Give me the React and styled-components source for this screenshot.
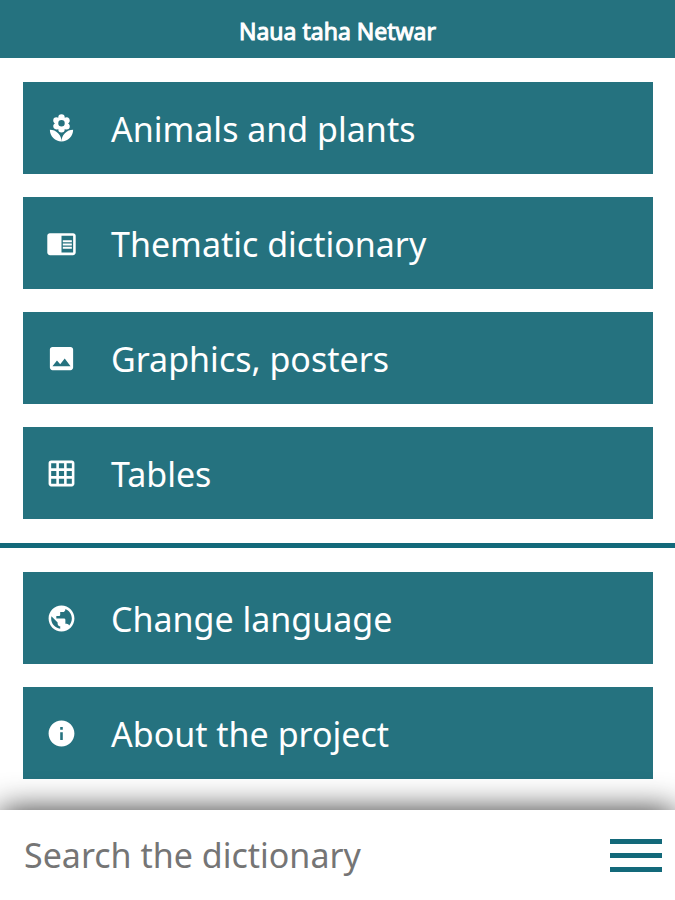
import React, { useState } from "react";
import styled, { createGlobalStyle } from "styled-components";
import {
  MdLocalFlorist,
  MdChromeReaderMode,
  MdImage,
  MdGridOn,
  MdPublic,
  MdInfo,
} from "react-icons/md";

const sections = [
  { label: "Animals and plants", Icon: MdLocalFlorist },
  { label: "Thematic dictionary", Icon: MdChromeReaderMode },
  { label: "Graphics, posters", Icon: MdImage },
  { label: "Tables", Icon: MdGridOn },
];

const settings = [
  { label: "Change language", Icon: MdPublic },
  { label: "About the project", Icon: MdInfo },
];

const App = () => {
  const [query, setQuery] = useState("");

  return (
    <Page>
      <GlobalStyle />
      <Header>
        <h1>Naua taha Netwar</h1>
      </Header>
      <main>
        <MenuList items={sections} />
        <Divider />
        <MenuList items={settings} />
      </main>
      <SearchBar>
        <SearchInput
          type="text"
          aria-label="Search the dictionary"
          placeholder="Search the dictionary"
          value={query}
          onChange={(e) => setQuery(e.target.value)}
        />
        <MenuToggle type="button" aria-label="Menu">
          <span></span>
          <span></span>
          <span></span>
        </MenuToggle>
      </SearchBar>
    </Page>
  );
};

const MenuList = ({ items }) => (
  <Menu>
    {items.map(({ label, Icon }) => (
      <MenuButton key={label} type="button">
        <Icon />
        <span>{label}</span>
      </MenuButton>
    ))}
  </Menu>
);

const GlobalStyle = createGlobalStyle`
  :root {
    --c-teal: #25727f;
    --c-teal-dark: #13697a;
  }
  * {
    box-sizing: border-box;
  }
  body {
    margin: 0;
    background: #fff;
    font-family: "Noto Sans", "Open Sans", sans-serif;
  }
  button,
  input {
    font-family: inherit;
  }
`;

const Page = styled.div`
  display: flex;
  flex-direction: column;
  min-height: 100vh;

  main {
    flex: 1;
  }
`;

const Header = styled.header`
  padding: 18px 24px 14px;
  background: var(--c-teal);
  color: #fff;
  text-align: center;

  h1 {
    margin: 0;
    font-size: 23px;
    line-height: 26px;
    font-weight: 400;
    -webkit-text-stroke: 1px #fff;
  }
`;

const Menu = styled.nav`
  display: flex;
  flex-direction: column;
  gap: 23px;
  padding: 24px 22px 24px 23px;
`;

const MenuButton = styled.button`
  display: flex;
  align-items: center;
  gap: 34px;
  padding: 20px 23px;
  border: none;
  background: var(--c-teal);
  color: #fff;
  font-size: 34px;
  line-height: 50px;
  text-align: left;
  cursor: pointer;

  svg {
    flex: none;
    width: 31px;
    height: 31px;
  }
  span {
    padding-top: 2px;
  }
`;

const Divider = styled.hr`
  height: 5px;
  margin: 0;
  border: none;
  background: var(--c-teal-dark);
`;

const SearchBar = styled.div`
  position: sticky;
  bottom: 0;
  display: flex;
  align-items: center;
  gap: 24px;
  padding: 19px 13px 19px 24px;
  background: #fff;
  box-shadow: 0 0 32px rgba(0, 0, 0, 0.8);
`;

const SearchInput = styled.input`
  flex: 1;
  min-width: 0;
  height: 52px;
  padding: 0;
  border: none;
  outline: none;
  background: transparent;
  color: #333;
  font-size: 34px;

  &::placeholder {
    color: #757575;
  }
`;

const MenuToggle = styled.button`
  display: flex;
  flex-direction: column;
  gap: 9px;
  width: 52px;
  padding: 0;
  border: none;
  background: transparent;
  cursor: pointer;

  span {
    height: 5px;
    background: var(--c-teal-dark);
  }
`;

export default App;
